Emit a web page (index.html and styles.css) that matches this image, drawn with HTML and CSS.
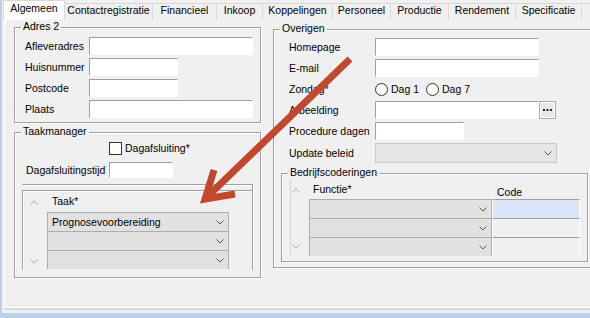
FILE: index.html
```html
<!DOCTYPE html>
<html lang="nl">
<head>
    <meta charset="UTF-8">
    <meta name="viewport" content="width=device-width, initial-scale=1.0">
    <title>Relatie - Algemeen</title>
    <link rel="stylesheet" href="styles.css">
</head>
<body>
    <div class="window">
        <div class="tabs">
            <div class="tab active">Algemeen</div>
            <div class="tab">Contactregistratie</div>
            <div class="tab">Financieel</div>
            <div class="tab">Inkoop</div>
            <div class="tab">Koppelingen</div>
            <div class="tab">Personeel</div>
            <div class="tab">Productie</div>
            <div class="tab">Rendement</div>
            <div class="tab">Specificatie</div>
            <div class="tab">Tarieven</div>
        </div>

        <div class="page">
            <!-- left column -->
            <div class="col-left">
                <div class="group">
                    <div class="group-title">Adres 2</div>
                    <div class="form">
                        <span>Afleveradres</span>
                        <input type="text" class="field w-long">
                        <span>Huisnummer</span>
                        <input type="text" class="field w-short">
                        <span>Postcode</span>
                        <input type="text" class="field w-short">
                        <span>Plaats</span>
                        <input type="text" class="field w-long">
                    </div>
                </div>

                <div class="group taak">
                    <div class="group-title">Taakmanager</div>
                    <div class="task-form">
                        <span></span>
                        <label class="check"><span class="box"></span>Dagafsluiting*</label>
                        <span>Dagafsluitingstijd</span>
                        <input type="text" class="field w-time">
                    </div>
                    <div class="grid-frame">
                        <div class="grid-inner">
                            <div class="scroll">
                                <svg width="8" height="5" viewBox="0 0 8 5"><path d="M0.5 4.5 L4 1 L7.5 4.5" stroke="#c4c4c4" stroke-width="1.3" fill="none"/></svg>
                                <svg width="8" height="5" viewBox="0 0 8 5"><path d="M0.5 0.5 L4 4 L7.5 0.5" stroke="#c4c4c4" stroke-width="1.3" fill="none"/></svg>
                            </div>
                            <div class="grid-body">
                                <div class="grid-head">Taak*</div>
                                <div class="combo"><span>Prognosevoorbereiding</span><svg width="8" height="5" viewBox="0 0 8 5"><path d="M0.5 0.5 L4 4 L7.5 0.5" stroke="#555" fill="none"/></svg></div>
                                <div class="combo"><span></span><svg width="8" height="5" viewBox="0 0 8 5"><path d="M0.5 0.5 L4 4 L7.5 0.5" stroke="#555" fill="none"/></svg></div>
                                <div class="combo"><span></span><svg width="8" height="5" viewBox="0 0 8 5"><path d="M0.5 0.5 L4 4 L7.5 0.5" stroke="#555" fill="none"/></svg></div>
                            </div>
                        </div>
                    </div>
                </div>
            </div>

            <!-- right column -->
            <div class="col-right">
                <div class="group overig">
                    <div class="group-title">Overigen</div>
                    <div class="form wide">
                        <span>Homepage</span>
                        <input type="text" class="field w-long">
                        <span>E-mail</span>
                        <input type="text" class="field w-long">
                        <span>Zondag*</span>
                        <div class="radios">
                            <label class="radio"><span class="dot"></span>Dag 1</label>
                            <label class="radio"><span class="dot"></span>Dag 7</label>
                        </div>
                        <span>Afbeelding</span>
                        <div class="file-field">
                            <input type="text" class="field w-long">
                            <button class="browse" title="Bladeren"><svg width="9" height="2" viewBox="0 0 9 2"><rect x="0" y="0" width="2" height="2" fill="#222"/><rect x="3.5" y="0" width="2" height="2" fill="#222"/><rect x="7" y="0" width="2" height="2" fill="#222"/></svg></button>
                        </div>
                        <span>Procedure dagen</span>
                        <input type="text" class="field w-short">
                        <span>Update beleid</span>
                        <div class="combo select"><span></span><svg width="8" height="5" viewBox="0 0 8 5"><path d="M0.5 0.5 L4 4 L7.5 0.5" stroke="#555" fill="none"/></svg></div>
                    </div>

                    <div class="group codes">
                        <div class="group-title">Bedrijfscoderingen</div>
                        <div class="codes-grid">
                            <div class="scroll small">
                                <svg width="8" height="5" viewBox="0 0 8 5"><path d="M0.5 4.5 L4 1 L7.5 4.5" stroke="#c4c4c4" stroke-width="1.3" fill="none"/></svg>
                                <svg width="8" height="5" viewBox="0 0 8 5"><path d="M0.5 0.5 L4 4 L7.5 0.5" stroke="#c4c4c4" stroke-width="1.3" fill="none"/></svg>
                            </div>
                            <div class="codes-table">
                                <div class="th">Functie*</div>
                                <div class="th code-head">Code</div>
                                <div class="combo"><span></span><svg width="8" height="5" viewBox="0 0 8 5"><path d="M0.5 0.5 L4 4 L7.5 0.5" stroke="#555" fill="none"/></svg></div>
                                <div class="cell selected"></div>
                                <div class="combo"><span></span><svg width="8" height="5" viewBox="0 0 8 5"><path d="M0.5 0.5 L4 4 L7.5 0.5" stroke="#555" fill="none"/></svg></div>
                                <div class="cell"></div>
                                <div class="combo"><span></span><svg width="8" height="5" viewBox="0 0 8 5"><path d="M0.5 0.5 L4 4 L7.5 0.5" stroke="#555" fill="none"/></svg></div>
                                <div class="cell"></div>
                            </div>
                        </div>
                    </div>
                </div>
            </div>
        </div>
    </div>

    <!-- annotation arrow drawn over the form -->
    <svg class="arrow" width="590" height="318" viewBox="0 0 590 318">
        <path d="M350 59 L207 197" stroke="#c1472f" stroke-width="7" fill="none"/>
        <path d="M214 170 L205 199 L235 194" stroke="#c1472f" stroke-width="7" fill="none"/>
    </svg>
</body>
</html>
```

FILE: styles.css
```css
body {
    margin: 0;
    position: relative;
    height: 318px;
    overflow: hidden;
    background-color: #b9d1ea;
    font-family: "Liberation Sans", Arial, sans-serif;
    font-size: 10.5px;
    color: #000;
}

.window {
    margin-left: 2px;
    height: 313px;
    background-color: #f0f0f0;
    overflow: hidden;
}

/* tab strip */
.tabs {
    display: flex;
    align-items: flex-end;
    height: 20px;
    padding-left: 1px;
    white-space: nowrap;
}

.tab {
    flex: 0 0 auto;
    box-sizing: border-box;
    height: 17px;
    margin-right: -1px;
    line-height: 13px;
    text-align: center;
    border: 1px solid #d9d9d9;
    border-bottom: none;
    background-color: #f0f0f0;
}

.tab.active {
    height: 20px;
    padding-top: 1px;
    background-color: #fff;
    position: relative;
    z-index: 1;
}

.tab:nth-child(1) { width: 62px; }
.tab:nth-child(2) { width: 89px; }
.tab:nth-child(3) { width: 65px; }
.tab:nth-child(4) { width: 47px; }
.tab:nth-child(5) { width: 71px; }
.tab:nth-child(6) { width: 59px; }
.tab:nth-child(7) { width: 59px; }
.tab:nth-child(8) { width: 68px; }
.tab:nth-child(9) { width: 67px; }
.tab:nth-child(10) { width: 60px; }

/* tab page */
.page {
    box-sizing: border-box;
    display: flex;
    gap: 12px;
    height: 288px;
    margin-left: 2px;
    padding: 7px 0 0 9px;
    border-left: 1px solid #fff;
    border-bottom: 1px solid #fff;
    box-shadow: 0 2px 0 #dadada;
}

.col-left {
    flex: none;
    width: 247px;
}

.col-right {
    flex: none;
    width: 330px;
    margin-top: 2px;
}

/* group boxes */
.group {
    box-sizing: border-box;
    padding-bottom: 4px;
    border: 1px solid #a0a0a0;
    box-shadow: inset 1px 1px 0 #fff, 1px 1px 0 #fff;
}

.group-title {
    width: fit-content;
    margin: -8px 0 0 6px;
    padding: 0 2px;
    line-height: 13px;
    background-color: #f0f0f0;
}

.group.taak {
    margin-top: 9px;
    padding-bottom: 7px;
}

.group.overig {
    padding-bottom: 5px;
}

.group.codes {
    width: 307px;
    margin: 10px 0 0 7px;
    padding-bottom: 5px;
}

/* label / field grids */
.form {
    display: grid;
    grid-template-columns: 64px auto;
    row-gap: 3px;
    align-items: center;
    justify-items: start;
    padding: 4px 0 0 10px;
}

.form.wide {
    grid-template-columns: 86px auto;
    padding: 3px 0 0 15px;
}

.field {
    box-sizing: border-box;
    height: 18px;
    margin: 0;
    padding: 0 3px;
    font: inherit;
    background-color: #fff;
    border: 1px solid;
    border-color: #a0a0a0 #fff #fff #a0a0a0;
    border-radius: 0;
    outline: none;
}

.w-long { width: 164px; }
.w-short { width: 89px; }
.w-time {
    width: 64px;
    height: 16px;
}

.task-form {
    display: grid;
    grid-template-columns: 83px auto;
    row-gap: 7px;
    align-items: center;
    justify-items: start;
    padding: 4px 0 0 11px;
}

.check,
.radio {
    display: flex;
    align-items: center;
    gap: 3px;
    line-height: 13px;
}

.box {
    box-sizing: border-box;
    width: 13px;
    height: 13px;
    border: 1px solid #333;
    background-color: #fff;
}

.radios {
    display: flex;
    height: 18px;
    align-items: center;
}

.radio {
    margin-right: 7px;
}

.dot {
    box-sizing: border-box;
    width: 13px;
    height: 13px;
    border: 1px solid #333;
    border-radius: 50%;
    background-color: #fff;
}

.file-field {
    display: flex;
}

.browse {
    box-sizing: border-box;
    display: flex;
    align-items: center;
    justify-content: center;
    width: 17px;
    height: 18px;
    padding: 0;
    background-color: #e8e8e8;
    border: 1px solid #adadad;
    box-shadow: inset 0 0 0 1px #fff;
}

/* combo boxes */
.combo {
    box-sizing: border-box;
    display: flex;
    align-items: center;
    justify-content: space-between;
    height: 19px;
    padding: 0 4px 0 4px;
    background-color: #e1e1e1;
    border: 1px solid #adadad;
    border-bottom: none;
}

.combo.select {
    width: 182px;
    height: 20px;
    background-color: #e5e5e5;
    border: 1px solid #cacaca;
}

/* task grid */
.grid-frame {
    margin: 6px 7px 0 7px;
    padding-top: 5px;
    border-top: 1px solid #a0a0a0;
    border-right: 1px solid #a0a0a0;
    box-shadow: inset 0 1px 0 #fff, 1px 0 0 #fff;
}

.grid-inner {
    box-sizing: border-box;
    display: flex;
    height: 80px;
    overflow: hidden;
    border-top: 1px solid #a0a0a0;
    border-left: 1px solid #a0a0a0;
    box-shadow: inset 1px 1px 0 #fff;
}

.scroll {
    box-sizing: border-box;
    display: flex;
    flex-direction: column;
    justify-content: space-between;
    align-items: center;
    width: 24px;
    padding: 9px 3px 6px 0;
}

.scroll.small {
    width: 18px;
    padding: 8px 9px 7px 0;
}

.grid-body {
    width: 182px;
}

.grid-head {
    height: 21px;
    padding-left: 5px;
    line-height: 21px;
}

/* company codes */
.codes-grid {
    display: flex;
    margin: 1px 0 0 8px;
    border-left: 1px solid #d4d4d4;
}

.codes-table {
    display: grid;
    grid-template-columns: 183px 88px;
    grid-auto-rows: 19px;
}

.th {
    padding-left: 4px;
    line-height: 19px;
}

.code-head {
    padding: 3px 0 0 5px;
    line-height: 18px;
}

.cell {
    box-sizing: border-box;
    background-color: #f0f0f0;
    border-top: 1px solid #a0a0a0;
    border-left: 1px solid #fff;
    border-right: 1px solid #fff;
}

.cell.selected {
    background-color: #dae6f7;
}

/* annotation */
.arrow {
    position: absolute;
    left: 0;
    top: 0;
    pointer-events: none;
}
```
